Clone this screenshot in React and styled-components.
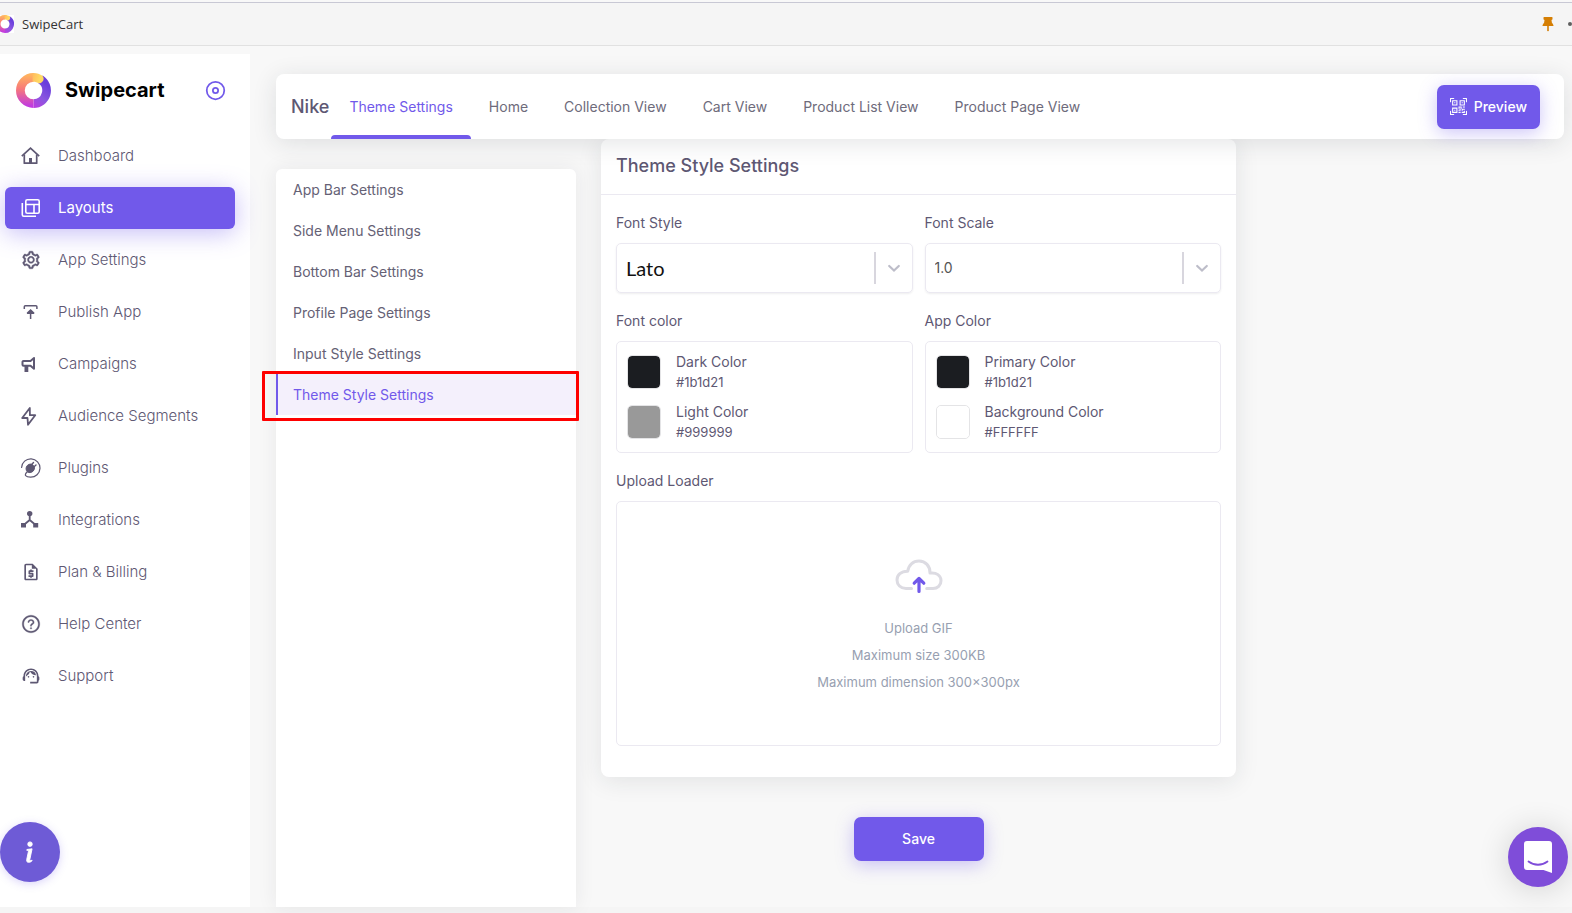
import React from 'react';
import styled, { createGlobalStyle, css } from 'styled-components';
import { AiOutlineQuestionCircle, AiOutlineSetting } from 'react-icons/ai';
import { BsInfo, BsQrCodeScan } from 'react-icons/bs';
import { FiDisc } from 'react-icons/fi';
import { MdOutlineRequestQuote, MdSupportAgent } from 'react-icons/md';

const GlobalStyle = createGlobalStyle`
  *, *::before, *::after {
    box-sizing: border-box;
  }
  body {
    margin: 0;
    background: #f8f8f8;
    color: #5e5873;
    font-family: Inter, "Liberation Sans", sans-serif;
    font-size: 14px;
    line-height: 20px;
  }
  button, input, select {
    font: inherit;
  }
  a {
    color: inherit;
    text-decoration: none;
  }
  ul {
    list-style: none;
    margin: 0;
    padding: 0;
  }
`;

const Page = styled.div`
  display: flex;
  flex-direction: column;
  min-height: 100vh;
  border-bottom: 6px solid #f5f5f5;
`;

const TitleBar = styled.header`
  display: flex;
  align-items: center;
  gap: 8px;
  height: 44px;
  margin-top: 2px;
  background: #f5f5f5;
  border-top: 1px solid #c8c8d4;
  border-bottom: 1px solid #e1e1e1;
  color: #333;
  font-family: "Open Sans", sans-serif;
  font-size: 13px;
  overflow: hidden;
`;

const TitleLogo = styled.span`
  display: flex;
  margin-left: -4px;
  background: #fff;
`;

const TitleActions = styled.div`
  display: flex;
  align-items: center;
  gap: 14px;
  margin-left: auto;
`;

const Dot = styled.span`
  width: 4px;
  height: 4px;
  border-radius: 50%;
  background: #5f5f5f;
`;

const Body = styled.div`
  display: flex;
  flex: 1;
  padding-top: 8px;
`;

const Sidebar = styled.aside`
  flex: 0 0 250px;
  background: #fff;
`;

const Brand = styled.div`
  display: flex;
  align-items: center;
  gap: 14px;
  height: 72px;
  padding: 0 24px 0 16px;
  color: #000;
  font-size: 20px;
  font-weight: 700;
`;

const PinButton = styled.button`
  display: flex;
  margin-left: auto;
  padding: 0;
  border: 0;
  background: none;
  color: #7159ea;
`;

const SideNav = styled.ul`
  display: flex;
  flex-direction: column;
  gap: 10px;
  padding: 9px 15px 0 5px;
`;

const SideLink = styled.a`
  display: flex;
  align-items: center;
  gap: 17px;
  height: 42px;
  padding-left: 16px;
  border-radius: 6px;
  font-size: 15px;
  font-weight: 300;
  svg {
    flex: 0 0 20px;
  }
  ${({ $active }) =>
    $active &&
    css`
      background: #7159ea;
      box-shadow: 0 4px 24px rgba(113, 89, 234, 0.4);
      color: #fff;
      font-weight: 400;
    `}
`;

const Main = styled.main`
  flex: 1;
  min-width: 0;
  padding: 20px 8px 0 26px;
`;

const TopBar = styled.div`
  position: relative;
  z-index: 1;
  display: flex;
  align-items: center;
  height: 65px;
  padding: 0 24px 0 15px;
  border-radius: 8px;
  background: #fff;
  box-shadow: 0 4px 24px rgba(34, 41, 47, 0.12);
`;

const StoreName = styled.h1`
  margin: 0 2px 0 0;
  font-size: 18px;
  font-weight: 500;
`;

const Tabs = styled.nav`
  display: flex;
  align-self: stretch;
`;

const Tab = styled.a`
  display: flex;
  align-items: center;
  padding: 0 18px;
  color: ${({ $active }) => ($active ? '#7159ea' : '#6e6b7b')};
  position: relative;
  ${({ $active }) =>
    $active &&
    css`
      &::after {
        content: '';
        position: absolute;
        right: 0;
        bottom: 0;
        left: 0;
        height: 4px;
        border-radius: 4px 4px 0 0;
        background: #7159ea;
      }
    `}
`;

const PrimaryButton = styled.button`
  display: inline-flex;
  align-items: center;
  justify-content: center;
  gap: 7px;
  height: 44px;
  min-width: ${({ $wide }) => ($wide ? '130px' : '0')};
  padding: 0 13px;
  border: 0;
  border-radius: 7px;
  background: #7159ea;
  box-shadow: 0 4px 18px rgba(113, 89, 234, 0.35);
  color: #fff;
  font-weight: 500;
`;

const PreviewButton = styled(PrimaryButton)`
  margin-left: auto;
`;

const Columns = styled.div`
  display: flex;
  gap: 25px;
  min-height: calc(100% - 65px);
`;

const SettingsMenu = styled.ul`
  flex: 0 0 300px;
  margin-top: 30px;
  border-radius: 6px 6px 0 0;
  background: #fff;
  box-shadow: 0 0 20px rgba(34, 41, 47, 0.08);
`;

const SettingsItem = styled.li`
  position: relative;
`;

const SettingsLink = styled.a`
  display: flex;
  align-items: center;
  height: 41px;
  padding-left: 15px;
  border-left: 2px solid transparent;
  color: #656175;
  ${({ $active }) =>
    $active &&
    css`
      border-left-color: #7159ea;
      background: #f4f0fc;
      color: #7159ea;
    `}
`;

const Highlight = styled.span`
  position: absolute;
  inset: -3px -3px -6px -14px;
  border: 3px solid #fe0000;
  border-radius: 1px;
  pointer-events: none;
`;

const FormColumn = styled.form`
  flex: 0 1 635px;
  display: flex;
  flex-direction: column;
  align-items: center;
  gap: 40px;
`;

const Card = styled.section`
  width: 100%;
  padding-bottom: 31px;
  border-radius: 8px;
  background: #fff;
  box-shadow: 0 4px 24px rgba(34, 41, 47, 0.1);
`;

const CardTitle = styled.h2`
  margin: 0;
  padding: 17px 15px 18px;
  border-bottom: 1px solid #ebe9f1;
  font-size: 18px;
  font-weight: 500;
`;

const Fields = styled.div`
  display: grid;
  grid-template-columns: 1fr 1fr;
  gap: 18px 12px;
  padding: 18px 15px 0;
`;

const Field = styled.div`
  display: flex;
  flex-direction: column;
  gap: 10px;
  grid-column: ${({ $full }) => ($full ? '1 / -1' : 'auto')};
`;

const SelectBox = styled.div`
  display: flex;
  align-items: center;
  height: 50px;
  border: 1px solid #ebe9f1;
  border-radius: 5px;
  box-shadow: 0 1px 2px rgba(34, 41, 47, 0.08);
  svg {
    flex: none;
    margin: 0 8px;
    color: #bdbdc9;
  }
`;

const Select = styled.select`
  flex: 1;
  height: 32px;
  padding: 0 9px;
  border: 0;
  border-right: 2px solid #d8d6de;
  outline: 0;
  appearance: none;
  background: none;
  color: ${({ $sample }) => ($sample ? '#111' : '#555')};
  font-family: ${({ $sample }) => $sample || 'Inter'}, sans-serif;
  font-size: ${({ $sample }) => ($sample ? '20px' : '14px')};
`;

const ColorBox = styled.div`
  display: flex;
  flex-direction: column;
  gap: 10px;
  padding: 10px;
  border: 1px solid #ebe9f1;
  border-radius: 5px;
`;

const ColorRow = styled.label`
  display: flex;
  align-items: center;
  gap: 15px;
`;

const ColorInput = styled.input`
  width: 34px;
  height: 34px;
  padding: 0;
  border: 1px solid #e4e4e6;
  border-radius: 5px;
  appearance: none;
  background: none;
  overflow: hidden;
  &::-webkit-color-swatch-wrapper {
    padding: 0;
  }
  &::-webkit-color-swatch {
    border: 0;
    border-radius: 4px;
  }
`;

const ColorText = styled.span`
  display: flex;
  flex-direction: column;
`;

const ColorHex = styled.span`
  font-size: 13px;
`;

const DropZone = styled.label`
  display: flex;
  flex-direction: column;
  align-items: center;
  height: 245px;
  padding-top: 57px;
  border: 1px solid #ebe9f1;
  border-radius: 5px;
  color: #989fb1;
  font-size: 13px;
  line-height: 27px;
  svg {
    margin-bottom: 21px;
  }
`;

const FileInput = styled.input`
  position: absolute;
  width: 1px;
  height: 1px;
  opacity: 0;
`;

const RoundButton = styled.button`
  position: fixed;
  z-index: 2;
  display: flex;
  align-items: center;
  justify-content: center;
  width: 60px;
  height: 60px;
  padding: 0;
  border: 0;
  border-radius: 50%;
  color: #fff;
`;

const InfoButton = styled(RoundButton)`
  bottom: 31px;
  left: 0;
  background: #6e5bd6;
  box-shadow: 0 2px 8px rgba(113, 89, 234, 0.25);
  svg {
    stroke: currentColor;
    stroke-width: 0.4;
  }
`;

const ChatButton = styled(RoundButton)`
  right: 4px;
  bottom: 26px;
  background: #7f4dd9;
  box-shadow: 0 2px 32px rgba(0, 0, 0, 0.16);
`;

const Logo = ({ size, id }) => (
  <svg width={size} height={size} viewBox="0 0 36 36" fill="none" aria-hidden="true">
    <defs>
      <linearGradient id={`${id}-left`} x1="18" y1="2" x2="18" y2="34" gradientUnits="userSpaceOnUse">
        <stop offset="0" stopColor="#ffb35f" />
        <stop offset="0.45" stopColor="#f7787a" />
        <stop offset="1" stopColor="#c13adf" />
      </linearGradient>
      <linearGradient id={`${id}-right`} x1="14" y1="34" x2="32" y2="12" gradientUnits="userSpaceOnUse">
        <stop offset="0" stopColor="#c13adf" />
        <stop offset="0.5" stopColor="#8b57e0" />
        <stop offset="1" stopColor="#6a3fdc" />
      </linearGradient>
      <linearGradient id={`${id}-tip`} x1="14" y1="4" x2="29" y2="8" gradientUnits="userSpaceOnUse">
        <stop offset="0" stopColor="#ffb35f" />
        <stop offset="0.7" stopColor="#ffda62" />
      </linearGradient>
    </defs>
    <path d="M18 31.5A13.5 13.5 0 0 0 25 6.5" stroke={`url(#${id}-right)`} strokeWidth="9" />
    <path d="M18 4.5a13.5 13.5 0 0 0 0 27" stroke={`url(#${id}-left)`} strokeWidth="9" />
    <path
      d="M17 0c4-.1 7.500.9 10.200 2.900 2.700 3 .7 7.600-3.600 7.900C22 9.600 20 9 17 9z"
      fill={`url(#${id}-tip)`}
    />
  </svg>
);

const HomeIcon = () => (
  <svg width="20" height="20" viewBox="0 0 20 20" fill="none" stroke="currentColor" strokeWidth="1.7" aria-hidden="true">
    <path d="M.8 10.200L9.500 2.200l8.700 8" />
    <path d="M3.300 8.500v8.700h12.400V8.500" strokeLinejoin="round" />
    <path d="M8 12h3v5H8z" fill="currentColor" stroke="none" />
  </svg>
);

const LayoutsIcon = () => (
  <svg width="20" height="20" viewBox="0 0 20 20" fill="none" stroke="currentColor" strokeWidth="1.6" aria-hidden="true">
    <rect x="4.800" y="1.800" width="13.400" height="13.400" rx="1.500" />
    <path d="M4.800 6.500h13.400M13 6.500v8.700" />
    <path d="M1.300 5v11.700a1.500 1.500 0 0 0 1.500 1.500H15" />
  </svg>
);

const PublishIcon = () => (
  <svg width="20" height="20" viewBox="0 0 20 20" fill="none" stroke="currentColor" strokeWidth="1.5" aria-hidden="true">
    <path d="M3.300 7V4.800a1 1 0 0 1 1-1h10.600a1 1 0 0 1 1 1V7" />
    <path d="M9.600 17V8.500M6.200 11.400L9.600 8l3.400 3.400" />
    <path d="M7.400 11.200L9.600 9l2.200 2.200z" fill="currentColor" />
  </svg>
);

const CampaignIcon = () => (
  <svg width="20" height="20" viewBox="0 0 20 20" fill="none" stroke="currentColor" strokeWidth="2" aria-hidden="true">
    <path d="M13 4v10.800L9.500 11.700H2.500a1 1 0 0 1-1-1V7.900a1 1 0 0 1 1-1h7z" strokeLinejoin="round" />
    <path d="M4.500 11.500v5.500h1.800v-5.500" />
  </svg>
);

const BoltIcon = () => (
  <svg width="20" height="20" viewBox="0 0 20 20" fill="none" stroke="currentColor" strokeWidth="1.8" strokeLinejoin="round" aria-hidden="true">
    <path d="M8.800 2L1.200 12h5.300L7 18.800 14.200 9.200H8.900z" />
  </svg>
);

const PluginIcon = () => (
  <svg width="20" height="20" viewBox="0 0 20 20" fill="none" stroke="currentColor" aria-hidden="true">
    <path d="M.6 9.500A9.200 9.200 0 1 1 9.500 19.200c-2.300 0-4-.4-4.800-1.500-.8-1.200.1-2.600 1.400-3.700" strokeWidth="1.200" strokeLinecap="round" />
    <path d="M6.300 7.500c2-1.900 4.300-1.800 5.900-.2s1.800 3.700 0 5.800c-1.700 1.700-4.500 2.100-6 .6s-1.600-4.500.1-6.200z" fill="currentColor" />
    <path d="M10.200 7l2.300-2.500M12.500 9.200l2.500-2.300" strokeWidth="1.400" strokeLinecap="round" />
  </svg>
);

const IntegrationIcon = () => (
  <svg width="20" height="20" viewBox="0 0 20 20" fill="currentColor" aria-hidden="true">
    <circle cx="8.700" cy="3.600" r="2.700" />
    <path d="M0 13h5v4.600H0zM12.200 13h5v4.600h-5z" />
    <path d="M8.700 5v5L3 14.800M8.700 10l5.700 4.800" fill="none" stroke="currentColor" strokeWidth="1.800" />
  </svg>
);

const PinIcon = () => (
  <svg width="12" height="16" viewBox="0 0 12 16" fill="#d57f05" aria-hidden="true">
    <path d="M1.500 1.500Q1.500 1 2 1h8q.5 0 .5.500v1.500q0 .5-.5.700l-.5.300.4 2.800 1 1.200q.6.800.6 2H.5q0-1.200.6-2l1-1.200L2.500 4 2 3.700q-.5-.2-.5-.7z" />
    <path d="M5.200 10h1.600v4.500L6 15.500l-.8-1z" />
  </svg>
);

const Chevron = () => (
  <svg width="20" height="20" viewBox="0 0 20 20" fill="none" stroke="currentColor" strokeWidth="2.200" strokeLinecap="round" aria-hidden="true">
    <path d="M5.200 8L10 12.500 14.800 8" />
  </svg>
);

const CloudIcon = () => (
  <svg width="48" height="35" viewBox="0 0 48 35" fill="none" strokeLinecap="round" strokeLinejoin="round" aria-hidden="true">
    <path
      d="M16.500 29.500H11C5.500 29.500 2 25.800 2 21s4-9 10.800-8.800C13.500 6 18 2 24 2c6.500 0 11.200 5 11 12.100 6.500-.9 11 2.400 11 7.600 0 4.700-3.500 7.800-8 7.800h-6.300"
      stroke="#dcdbe2"
      strokeWidth="3"
    />
    <path d="M24 32.500V20M19.200 24.200l4.800-4.700 4.800 4.700" stroke="#7159ea" strokeWidth="3.200" />
  </svg>
);

const ChatIcon = () => (
  <svg width="30" height="34" viewBox="0 0 30 34" fill="none" aria-hidden="true">
    <path d="M4 1h22a3 3 0 0 1 3 3v29l-8.500-3H4a3 3 0 0 1-3-3V4a3 3 0 0 1 3-3z" fill="#fff" />
    <path d="M5.500 21.500c5.500 4.300 13.500 4.300 19 0" stroke="#7f4dd9" strokeWidth="1.800" strokeLinecap="round" />
  </svg>
);

const sideLinks = [
  { label: 'Dashboard', icon: <HomeIcon /> },
  { label: 'Layouts', icon: <LayoutsIcon />, active: true },
  {
    label: 'App Settings',
    icon: <AiOutlineSetting size={20} stroke="currentColor" strokeWidth={28} />,
  },
  { label: 'Publish App', icon: <PublishIcon /> },
  { label: 'Campaigns', icon: <CampaignIcon /> },
  { label: 'Audience Segments', icon: <BoltIcon /> },
  { label: 'Plugins', icon: <PluginIcon /> },
  { label: 'Integrations', icon: <IntegrationIcon /> },
  { label: 'Plan & Billing', icon: <MdOutlineRequestQuote size={20} /> },
  {
    label: 'Help Center',
    icon: <AiOutlineQuestionCircle size={20} stroke="currentColor" strokeWidth={18} />,
  },
  { label: 'Support', icon: <MdSupportAgent size={20} /> },
];

const tabs = [
  'Theme Settings',
  'Home',
  'Collection View',
  'Cart View',
  'Product List View',
  'Product Page View',
];

const settings = [
  'App Bar Settings',
  'Side Menu Settings',
  'Bottom Bar Settings',
  'Profile Page Settings',
  'Input Style Settings',
  'Theme Style Settings',
];

function ColorGroup({ title, colors }) {
  return (
    <Field>
      <span>{title}</span>
      <ColorBox>
        {colors.map(([name, hex]) => (
          <ColorRow key={name}>
            <ColorInput type="color" defaultValue={hex.toLowerCase()} />
            <ColorText>
              <span>{name}</span>
              <ColorHex>{hex}</ColorHex>
            </ColorText>
          </ColorRow>
        ))}
      </ColorBox>
    </Field>
  );
}

function App() {
  return (
    <>
      <GlobalStyle />
      <Page>
        <TitleBar>
          <TitleLogo>
            <Logo size={18} id="title" />
          </TitleLogo>
          SwipeCart
          <TitleActions>
            <PinIcon />
            <Dot />
          </TitleActions>
        </TitleBar>
        <Body>
          <Sidebar>
            <Brand>
              <Logo size={35} id="brand" />
              Swipecart
              <PinButton type="button" aria-label="Collapse menu">
                <FiDisc size={21} />
              </PinButton>
            </Brand>
            <SideNav>
              {sideLinks.map(({ label, icon, active }) => (
                <li key={label}>
                  <SideLink href="#" $active={active}>
                    {icon}
                    {label}
                  </SideLink>
                </li>
              ))}
            </SideNav>
          </Sidebar>
          <Main>
            <TopBar>
              <StoreName>Nike</StoreName>
              <Tabs>
                {tabs.map((tab, i) => (
                  <Tab key={tab} href="#" $active={i === 0}>
                    {tab}
                  </Tab>
                ))}
              </Tabs>
              <PreviewButton type="button">
                <BsQrCodeScan size={17} />
                Preview
              </PreviewButton>
            </TopBar>
            <Columns>
              <SettingsMenu>
                {settings.map((item) => {
                  const active = item === 'Theme Style Settings';
                  return (
                    <SettingsItem key={item}>
                      <SettingsLink href="#" $active={active}>
                        {item}
                      </SettingsLink>
                      {active && <Highlight />}
                    </SettingsItem>
                  );
                })}
              </SettingsMenu>
              <FormColumn>
                <Card>
                  <CardTitle>Theme Style Settings</CardTitle>
                  <Fields>
                    <Field>
                      <label htmlFor="font-style">Font Style</label>
                      <SelectBox>
                        <Select id="font-style" $sample="Lato">
                          <option>Lato</option>
                        </Select>
                        <Chevron />
                      </SelectBox>
                    </Field>
                    <Field>
                      <label htmlFor="font-scale">Font Scale</label>
                      <SelectBox>
                        <Select id="font-scale">
                          <option>1.0</option>
                        </Select>
                        <Chevron />
                      </SelectBox>
                    </Field>
                    <ColorGroup
                      title="Font color"
                      colors={[
                        ['Dark Color', '#1b1d21'],
                        ['Light Color', '#999999'],
                      ]}
                    />
                    <ColorGroup
                      title="App Color"
                      colors={[
                        ['Primary Color', '#1b1d21'],
                        ['Background Color', '#FFFFFF'],
                      ]}
                    />
                    <Field $full>
                      <label htmlFor="loader">Upload Loader</label>
                      <DropZone>
                        <FileInput id="loader" type="file" accept="image/gif" />
                        <CloudIcon />
                        <span>Upload GIF</span>
                        <span>Maximum size 300KB</span>
                        <span>Maximum dimension 300×300px</span>
                      </DropZone>
                    </Field>
                  </Fields>
                </Card>
                <PrimaryButton type="button" $wide>
                  Save
                </PrimaryButton>
              </FormColumn>
            </Columns>
          </Main>
        </Body>
      </Page>
      <InfoButton type="button" aria-label="Info">
        <BsInfo size={36} />
      </InfoButton>
      <ChatButton type="button" aria-label="Open chat">
        <ChatIcon />
      </ChatButton>
    </>
  );
}

export default App;
